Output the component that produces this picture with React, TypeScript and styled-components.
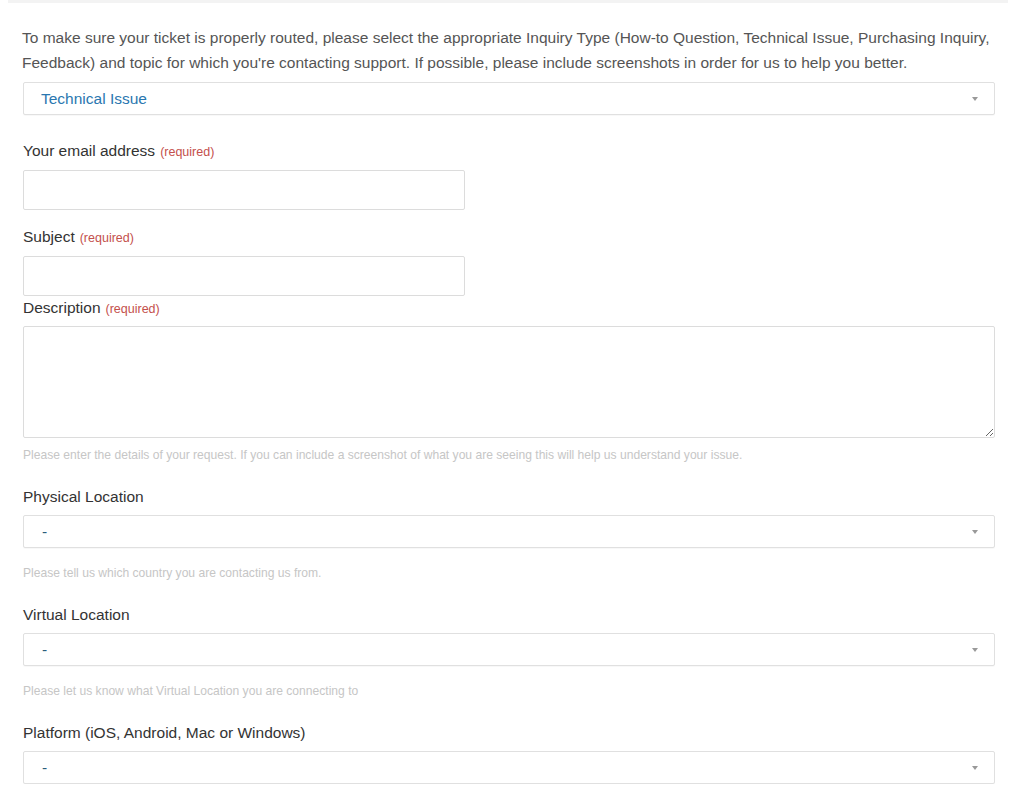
import React from 'react';
import styled, { createGlobalStyle } from 'styled-components';

const GlobalStyle = createGlobalStyle`
  body {
    margin: 0;
    background: #fff;
    font-family: "Liberation Sans", Arial, sans-serif;
  }
`;

const Page = styled.div`
  width: 1000px;
  margin: 0 0 0 8px;
  border-top: 3px solid #f3f3f3;
  padding: 22px 0 0 14px;
  box-sizing: border-box;
  font-family: "Liberation Sans", Arial, sans-serif;
`;

const Form = styled.form`
  width: 972px;
  margin-left: 1px;
`;

const Intro = styled.p`
  margin: 0 0 7px;
  width: 990px;
  font-size: 15.5px;
  line-height: 25px;
  color: #555;
`;

const Field = styled.div<{ $top?: number }>`
  margin-top: ${p => p.$top ?? 24}px;
`;

const Label = styled.label<{ $gap?: number }>`
  display: flex;
  align-items: baseline;
  height: 20px;
  font-size: 15.5px;
  line-height: 20px;
  color: #333;
  margin-bottom: ${p => p.$gap ?? 8}px;
`;

const Required = styled.span`
  font-size: 12.5px;
  line-height: 20px;
  color: #c4504c;
  margin-left: 5px;
`;

const TextInput = styled.input`
  display: block;
  box-sizing: border-box;
  width: 442px;
  height: 40px;
  border: 1px solid #dcdcdc;
  border-radius: 2px;
  background: #fff;
  outline: none;
`;

const TextArea = styled.textarea`
  display: block;
  box-sizing: border-box;
  width: 972px;
  height: 112px;
  border: 1px solid #dcdcdc;
  border-radius: 2px;
  background: #fff;
  outline: none;
  resize: vertical;
  font-family: inherit;
`;

const SelectBox = styled.div`
  box-sizing: border-box;
  height: 33px;
  border: 1px solid #e0e0e0;
  border-radius: 2px;
  box-shadow: 0 1px 1px rgba(0, 0, 0, 0.03);
  display: flex;
  align-items: center;
  justify-content: space-between;
  padding: 0 16px 0 17px;
  background: #fff;
`;

const SelectValue = styled.span<{ $placeholder?: boolean }>`
  font-size: 15.5px;
  color: ${p => (p.$placeholder ? '#2a5d7c' : '#2a77b0')};
  padding-left: ${p => (p.$placeholder ? '1px' : '0')};
`;

const Caret = styled.span`
  width: 0;
  height: 0;
  border-left: 3px solid transparent;
  border-right: 3px solid transparent;
  border-top: 4px solid #999;
`;

const Hint = styled.div<{ $top?: number }>`
  font-size: 12.1px;
  line-height: 16px;
  color: #c6c6c6;
  margin-top: ${p => p.$top ?? 17}px;
`;

const Select = ({ value, placeholder }: { value: string; placeholder?: boolean }) => (
  <SelectBox>
    <SelectValue $placeholder={placeholder}>{value}</SelectValue>
    <Caret />
  </SelectBox>
);

export default function App() {
  return (
    <>
      <GlobalStyle />
      <Page>
        <Intro>
          To make sure your ticket is properly routed, please select the appropriate Inquiry Type
          (How-to Question, Technical Issue, Purchasing Inquiry, Feedback) and topic for which
          you're contacting support. If possible, please include screenshots in order for us to
          help you better.
        </Intro>
        <Form>
          <Select value="Technical Issue" />

          <Field $top={26}>
            <Label $gap={9}>
              Your email address<Required>(required)</Required>
            </Label>
            <TextInput type="email" />
          </Field>

          <Field $top={17}>
            <Label $gap={9}>
              Subject<Required>(required)</Required>
            </Label>
            <TextInput type="text" />
          </Field>

          <Field $top={2}>
            <Label>
              Description<Required>(required)</Required>
            </Label>
            <TextArea />
            <Hint $top={9}>
              Please enter the details of your request. If you can include a screenshot of what you
              are seeing this will help us understand your issue.
            </Hint>
          </Field>

          <Field>
            <Label>Physical Location</Label>
            <Select value="-" placeholder />
            <Hint>Please tell us which country you are contacting us from.</Hint>
          </Field>

          <Field>
            <Label>Virtual Location</Label>
            <Select value="-" placeholder />
            <Hint>Please let us know what Virtual Location you are connecting to</Hint>
          </Field>

          <Field>
            <Label>Platform (iOS, Android, Mac or Windows)</Label>
            <Select value="-" placeholder />
          </Field>
        </Form>
      </Page>
    </>
  );
}
